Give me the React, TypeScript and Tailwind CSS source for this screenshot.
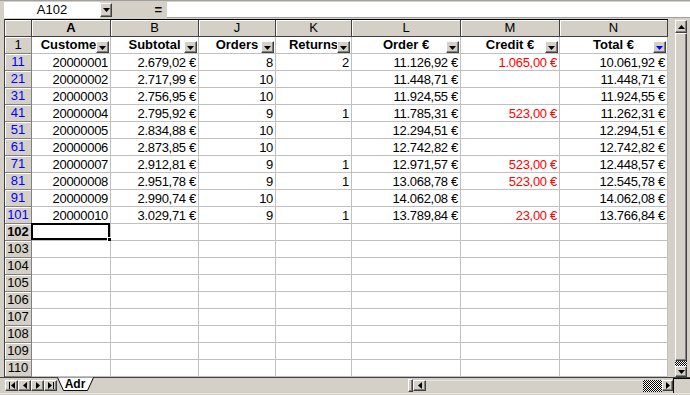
import React from "react";

const raised =
  "bg-[#d4d0c8] border border-t-white border-l-white border-r-[#404040] border-b-[#404040] shadow-[inset_-1px_-1px_0_#808080]";

const widths = ["w-[79px]", "w-[88px]", "w-[77px]", "w-[76px]", "w-[109px]", "w-[99px]", "w-[108px]"];
const letters = ["A", "B", "J", "K", "L", "M", "N"];
const titles = ["Customer", "Subtotal", "Orders", "Returns", "Order €", "Credit €", "Total €"];

const rows: string[][] = [
  ["11", "20000001", "2.679,02 €", "8", "2", "11.126,92 €", "1.065,00 €", "10.061,92 €"],
  ["21", "20000002", "2.717,99 €", "10", "", "11.448,71 €", "", "11.448,71 €"],
  ["31", "20000003", "2.756,95 €", "10", "", "11.924,55 €", "", "11.924,55 €"],
  ["41", "20000004", "2.795,92 €", "9", "1", "11.785,31 €", "523,00 €", "11.262,31 €"],
  ["51", "20000005", "2.834,88 €", "10", "", "12.294,51 €", "", "12.294,51 €"],
  ["61", "20000006", "2.873,85 €", "10", "", "12.742,82 €", "", "12.742,82 €"],
  ["71", "20000007", "2.912,81 €", "9", "1", "12.971,57 €", "523,00 €", "12.448,57 €"],
  ["81", "20000008", "2.951,78 €", "9", "1", "13.068,78 €", "523,00 €", "12.545,78 €"],
  ["91", "20000009", "2.990,74 €", "10", "", "14.062,08 €", "", "14.062,08 €"],
  ["101", "20000010", "3.029,71 €", "9", "1", "13.789,84 €", "23,00 €", "13.766,84 €"],
];

const emptyRows = ["102", "103", "104", "105", "106", "107", "108", "109", "110"];

function Tri({ dir = "down", color = "#000" }: { dir?: "down" | "up" | "left" | "right"; color?: string }) {
  const d =
    dir === "down" ? "M0 0h7L3.5 4z" : dir === "up" ? "M0 4h7L3.5 0z" : dir === "left" ? "M4 0v7L0 3.5z" : "M0 0v7L4 3.5z";
  const w = dir === "down" || dir === "up" ? 7 : 4;
  const h = dir === "down" || dir === "up" ? 4 : 7;
  return (
    <svg width={w} height={h} viewBox={`0 0 ${w} ${h}`} className="block">
      <path d={d} fill={color} />
    </svg>
  );
}

function FilterButton({ active }: { active?: boolean }) {
  return (
    <div className={`absolute right-[1px] bottom-0 w-[13px] h-[12px] flex items-end justify-center pb-[2px] ${raised}`}>
      <Tri color={active ? "#0000ff" : "#000"} />
    </div>
  );
}

function RowHead({ label, color = "text-black", bold }: { label: string; color?: string; bold?: boolean }) {
  return (
    <div
      className={`w-[27px] shrink-0 h-full bg-[#d4d0c8] border-r border-b border-[#808080] shadow-[inset_1px_1px_0_#fff] text-center text-[13px] leading-[16px] ${color} ${bold ? "font-bold" : ""}`}
    >
      {label}
    </div>
  );
}

function DataRow({ r }: { r: string[] }) {
  return (
    <div className="flex h-[17px]">
      <RowHead label={r[0]} color="text-[#0000ff]" />
      {r.slice(1).map((v, i) => (
        <div
          key={i}
          className={`${widths[i]} shrink-0 h-full bg-white border-r border-b border-[#c0c0c0] px-[2px] text-right text-[13px] leading-[17px] tracking-[-0.3px] whitespace-nowrap overflow-hidden ${i === 5 ? "text-[#ff0000]" : "text-black"}`}
        >
          {v}
        </div>
      ))}
    </div>
  );
}

function EmptyRow({ n }: { n: string }) {
  const sel = n === "102";
  return (
    <div className="flex h-[17px]">
      <RowHead label={n} bold={sel} />
      {widths.map((w, i) => (
        <div key={i} className={`${w} shrink-0 h-full bg-white border-r border-b border-[#c0c0c0] relative`}>
          {sel && i === 0 && (
            <div className="absolute -left-[1px] -top-[1px] -right-[0px] -bottom-[0px] border-2 border-black">
              <div className="absolute -right-[4px] -bottom-[4px] w-[5px] h-[5px] bg-black border border-white" />
            </div>
          )}
        </div>
      ))}
    </div>
  );
}

function NavBtn({ kind }: { kind: "first" | "prev" | "next" | "last" }) {
  return (
    <div className={`w-[13px] h-[11px] flex items-center justify-center gap-[1px] ${raised}`}>
      {kind === "first" && <div className="w-[1px] h-[7px] bg-black" />}
      {(kind === "first" || kind === "prev") && <Tri dir="left" />}
      {(kind === "next" || kind === "last") && <Tri dir="right" />}
      {kind === "last" && <div className="w-[1px] h-[7px] bg-black" />}
    </div>
  );
}

export default function App() {
  return (
    <div className="w-[690px] h-[395px] bg-[#d4d0c8] overflow-hidden flex flex-col font-['Liberation_Sans',Arial,sans-serif] text-black select-none">
      {/* formula bar */}
      <div className="h-[19px] flex items-start pt-[1px] pl-[4px] border-t border-[#a0a0a0]">
        <div className="w-[96px] h-[16px] bg-white text-center text-[13px] leading-[16px]">A102</div>
        <div className={`w-[12px] h-[14px] mt-[1px] flex items-center justify-center ${raised}`}>
          <Tri />
        </div>
        <div className="w-[55px] h-[16px] flex items-center justify-end pr-[5px] text-[13px] font-bold leading-[16px]">=</div>
        <div className="flex-1 h-[16px] bg-white border-b border-[#a0a0a0]" />
      </div>

      {/* sheet */}
      <div className="flex h-[358px]">
        <div className="w-[4px] shrink-0" />
        <div className="w-[664px] shrink-0 border-l border-[#404040] flex flex-col">
          {/* column letters */}
          <div className="flex h-[18px] border-t border-black">
            <div className="w-[27px] shrink-0 h-full bg-[#d4d0c8] border-r border-b border-[#404040] shadow-[inset_1px_1px_0_#fff]" />
            {letters.map((l, i) => (
              <div
                key={l}
                className={`${widths[i]} shrink-0 h-full bg-[#d4d0c8] border-r border-b border-[#404040] shadow-[inset_1px_1px_0_#fff] text-center text-[13px] leading-[16px] ${i === 0 ? "font-bold" : ""}`}
              >
                {l}
              </div>
            ))}
          </div>
          {/* filter header row */}
          <div className="flex h-[17px]">
            <RowHead label="1" />
            {titles.map((t, i) => (
              <div
                key={t}
                className={`${widths[i]} shrink-0 h-full bg-white border-r border-b border-[#c0c0c0] relative text-center text-[13px] font-bold leading-[16px] whitespace-nowrap overflow-hidden`}
              >
                {t}
                <FilterButton active={i === 6} />
              </div>
            ))}
          </div>
          {rows.map((r) => (
            <DataRow key={r[0]} r={r} />
          ))}
          {emptyRows.map((n) => (
            <EmptyRow key={n} n={n} />
          ))}
        </div>
        <div className="w-[7px] shrink-0" />
        {/* vertical scrollbar */}
        <div className="w-[12px] shrink-0 flex flex-col pt-[1px]">
          <div className={`h-[13px] flex items-center justify-center ${raised}`}>
            <Tri dir="up" />
          </div>
          <div className={`flex-1 ${raised}`} />
          <div className="h-[5px] bg-[repeating-conic-gradient(#000_0_25%,#fff_0_50%)] bg-[length:2px_2px]" />
          <div className={`h-[11px] flex items-center justify-center ${raised}`}>
            <Tri dir="down" />
          </div>
        </div>
        <div className="w-[3px] shrink-0" />
      </div>

      {/* tabs + horizontal scrollbar */}
      <div className="h-[16px] flex items-center border-t border-[#404040] pl-[5px]">
        <NavBtn kind="first" />
        <NavBtn kind="prev" />
        <NavBtn kind="next" />
        <NavBtn kind="last" />
        <div className="relative w-[38px] h-[15px] -mt-[1px] self-start">
          <svg width="38" height="15" className="absolute inset-0">
            <path d="M0.5 0.5 L6.5 13.5 L30.5 13.5 L36.5 0.5" fill="#fff" stroke="#000" />
          </svg>
          <div className="relative text-center text-[12px] font-bold leading-[14px] pr-[2px]">Adr</div>
        </div>
        <div className="flex-1" />
        <div className={`w-[5px] h-[13px] ${raised}`} />
        <div className={`w-[13px] h-[11px] flex items-center justify-center ${raised}`}>
          <Tri dir="left" />
        </div>
        <div className="w-[217px] h-[12px] bg-[#d4d0c8] border-t border-[#e8e6e0]" />
        <div className="w-[19px] h-[12px] bg-[repeating-conic-gradient(#000_0_25%,#fff_0_50%)] bg-[length:2px_2px]" />
        <div className={`w-[11px] h-[11px] flex items-center justify-center ${raised}`}>
          <Tri dir="right" />
        </div>
        <div className="w-[17px] h-full border-l border-t border-black" />
      </div>
      <div className="flex-1 border-t border-[#e8e6e0]" />
    </div>
  );
}
